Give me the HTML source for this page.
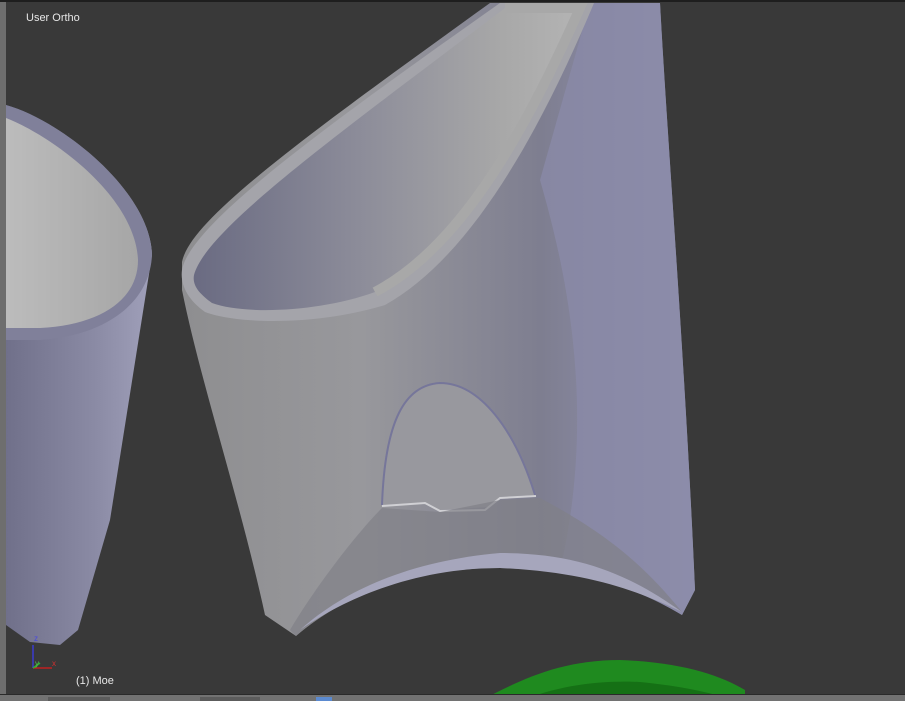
<!DOCTYPE html>
<html><head><style>
html,body{margin:0;padding:0;width:905px;height:701px;overflow:hidden;background:#393939;font-family:"Liberation Sans",sans-serif}
svg{position:absolute;left:0;top:0}
.t{position:absolute;color:#e6e6e6;font-size:11px}
</style></head><body>
<svg width="905" height="701" viewBox="0 0 905 701">
<defs>
<linearGradient id="body" x1="0" y1="0" x2="1" y2="0">
<stop offset="0" stop-color="#8e8e90"/><stop offset="0.35" stop-color="#98989c"/><stop offset="0.7" stop-color="#7e7e90"/><stop offset="0.85" stop-color="#8a8aa4"/><stop offset="1" stop-color="#9898b4"/>
</linearGradient>
<linearGradient id="inner" x1="0" y1="0" x2="1" y2="0">
<stop offset="0" stop-color="#6a6b82"/><stop offset="0.4" stop-color="#8a8a98"/><stop offset="0.8" stop-color="#a8a8a8"/><stop offset="1" stop-color="#b4b4b4"/>
</linearGradient>
<linearGradient id="left" x1="0" y1="0" x2="1" y2="0">
<stop offset="0" stop-color="#70708a"/><stop offset="0.6" stop-color="#8a8aa4"/><stop offset="1" stop-color="#a0a0ba"/>
</linearGradient>
<linearGradient id="linner" x1="0" y1="0" x2="1" y2="0">
<stop offset="0" stop-color="#bcbcbc"/><stop offset="1" stop-color="#a6a6a6"/>
</linearGradient>
</defs>
<rect x="0" y="0" width="6" height="701" fill="#6e6e6e"/>
<rect x="0" y="0" width="905" height="2" fill="#1e1e1e"/>
<!-- left object -->
<path d="M6,105 C60,120 150,190 152,255 L110,520 L78,630 L60,645 L30,642 L6,625 Z" fill="url(#left)"/>
<path d="M6,105 C60,120 150,190 152,255 C150,300 110,335 40,340 L6,340 Z" fill="#80809a"/>
<path d="M6,118 C50,135 135,195 138,260 C138,300 100,325 40,328 L6,328 Z" fill="url(#linner)"/>
<!-- right object body -->
<path d="M182,262 C190,220 300,140 490,3 L660,3 C668,150 685,360 695,590 L682,615 C640,590 590,570 500,568 C420,568 350,590 296,636 L265,615 C240,500 200,380 182,290 Z" fill="url(#body)"/>
<path d="M590,3 L660,3 C668,150 685,360 695,590 L682,615 C640,590 600,575 560,570 C600,400 560,250 540,180 Z" fill="#8a8aa8" opacity="0.8"/>
<!-- inner opening -->
<path d="M182,270 C190,225 320,130 500,3 L594,3 C545,120 475,255 385,305 C320,325 240,325 205,312 C188,300 180,285 182,270 Z" fill="#a4a4aa"/>
<path d="M194,275 C206,230 330,140 505,8 L580,8 C530,120 465,245 375,292 C320,312 245,315 212,303 C200,294 192,286 194,275 Z" fill="url(#inner)"/>
<path d="M505,8 L580,8 C530,120 465,245 375,292" fill="none" stroke="#a8a8a8" stroke-width="10"/>
<!-- arch -->
<path d="M382,505 C385,420 405,385 440,383 C480,383 515,430 535,495 L500,497 L488,507 L440,510 L425,502 Z" fill="#98989e"/>
<path d="M382,505 C385,420 405,385 440,383 C480,383 515,430 535,495" fill="none" stroke="#76769a" stroke-width="2"/>
<path d="M382,506 L425,503 L440,511 L485,510 L500,498 L536,496" fill="none" stroke="#d0d0d4" stroke-width="2"/>
<path d="M382,508 L440,512 L500,500 L540,498 C600,530 640,560 682,612 C640,590 590,570 500,568 C420,568 350,590 296,636 L290,630 C320,580 360,530 382,508 Z" fill="#808088" opacity="0.7"/>
<path d="M300,630 C350,585 420,560 500,553 C580,553 630,575 682,612 C640,592 590,572 500,568 C420,568 350,595 300,630 Z" fill="#a6a6bc"/>
<!-- green object -->
<path d="M480,701 C520,680 560,660 620,660 C680,662 720,675 745,690 L745,701 Z" fill="#1f8a1f"/>
<path d="M520,701 C560,685 600,680 640,682 C680,686 710,692 735,701 Z" fill="#157015"/>
<!-- axes -->
<line x1="33" y1="645" x2="33" y2="668" stroke="#3b3bd0" stroke-width="1.5"/>
<line x1="33" y1="668" x2="52" y2="668" stroke="#c02020" stroke-width="1.5"/>
<line x1="33" y1="668" x2="40" y2="663" stroke="#30b030" stroke-width="1.5"/>
<text x="34" y="641" font-size="8" fill="#4848e0" font-family="Liberation Sans">z</text>
<text x="35" y="666" font-size="8" fill="#50c050" font-family="Liberation Sans">y</text>
<text x="52" y="666" font-size="8" fill="#d03030" font-family="Liberation Sans">x</text>
<rect x="0" y="695" width="905" height="6" fill="#727272"/>
<rect x="0" y="694" width="905" height="1" fill="#2a2a2a"/>
<rect x="48" y="697" width="62" height="4" fill="#5c5c5c"/>
<rect x="200" y="697" width="60" height="4" fill="#5c5c5c"/>
<rect x="316" y="697" width="16" height="4" fill="#5b8ad0"/>
</svg>
<div class="t" style="left:26px;top:12px">User Ortho</div>
<div class="t" style="left:76px;top:675px">(1) Moe</div>
</body></html>
